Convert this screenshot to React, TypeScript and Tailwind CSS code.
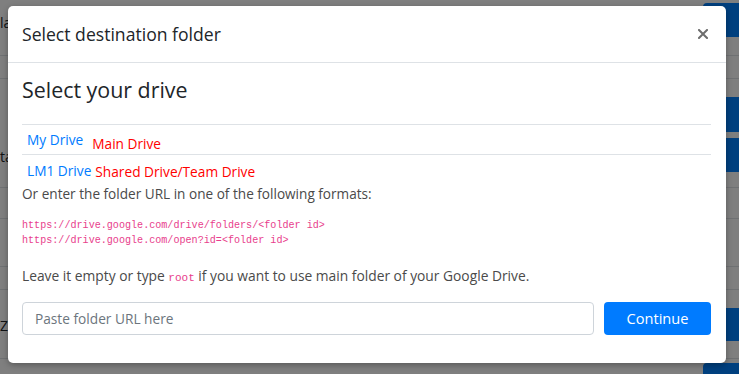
import React from 'react'

const sans = { fontFamily: '"Open Sans", "Noto Sans", sans-serif' }
const mono = { fontFamily: '"Liberation Mono", "DejaVu Sans Mono", monospace' }

function BgRow({
  h,
  text,
  textTop,
  blues = [],
}: {
  h: string
  text?: string
  textTop?: string
  blues?: string[]
}) {
  return (
    <div className={`relative flex justify-between border-b border-[#dee2e6] ${h}`}>
      <div className={`text-[14px] text-[#212529] ${textTop ?? ''}`}>{text}</div>
      <div className="flex flex-col">
        {blues.map((b, i) => (
          <div key={i} className={`w-[36px] rounded-l-[4px] bg-[#0080ff] ${b}`} />
        ))}
      </div>
    </div>
  )
}

export default function App() {
  return (
    <div className="relative h-[374px] w-[739px] overflow-hidden bg-white" style={sans}>
      {/* page behind the dialog */}
      <div className="flex flex-col">
        <BgRow h="h-[56px]" text="la" textTop="mt-[12px] text-[#5a2a7a]" blues={['mt-[3px] h-[34px]']} />
        <BgRow h="h-[23px]" />
        <BgRow h="h-[109px]" text="ta" textTop="mt-[67px]" blues={['mt-[18px] h-[35px]', 'mt-[6px] h-[34px]']} />
        <BgRow h="h-[31px]" />
        <BgRow h="h-[48px]" />
        <BgRow h="h-[23px]" />
        <BgRow h="h-[69px]" text="Z" textTop="mt-[25px]" blues={['mt-[18px] h-[33px]']} />
        <BgRow h="h-[20px]" blues={['mt-[4px] h-[30px]']} />
      </div>

      {/* backdrop */}
      <div className="absolute inset-0 bg-black/50" />

      {/* modal */}
      <div className="absolute left-[8px] top-[6px] flex h-[357px] w-[718px] flex-col rounded-[5px] bg-white shadow-[0_2px_6px_rgba(0,0,0,0.3)]">
        <div className="flex h-[57px] shrink-0 items-center justify-between border-b border-[#dee2e6] pl-[14px] pr-[18px]">
          <h5 className="text-[17.6px] leading-[27px] text-[#212529]">Select destination folder</h5>
          <svg width="10" height="10" viewBox="0 0 10 10" className="text-[#6d6d6d]">
            <path d="M1 1 L9 9 M9 1 L1 9" stroke="currentColor" strokeWidth="2" strokeLinecap="square" />
          </svg>
        </div>

        <div className="flex flex-col pl-[14px] pr-[15px]">
          <h3 className="mt-[13px] text-[21.4px] leading-[28px] text-[#212529]">Select your drive</h3>

          <div className="mt-[20px] border-t border-[#dee2e6]" />
          <div className="flex h-[29px] items-start pl-[5px] text-[13.7px]">
            <span className="mt-[5px] leading-[20px] text-[#007bff]">My Drive</span>
            <span className="ml-[9px] mt-[9px] leading-[20px] text-[#ff0000]">Main Drive</span>
          </div>
          <div className="border-t border-[#dee2e6]" />
          <div className="flex h-[29px] items-start pl-[5px] text-[13.7px]">
            <span className="mt-[6px] leading-[20px] text-[#007bff]">LM1 Drive</span>
            <span className="ml-[4px] mt-[7px] leading-[20px] text-[#ff0000]">Shared Drive/Team Drive</span>
          </div>

          <p className="text-[13.6px] leading-[20px] text-[#4a4a4a]">
            Or enter the folder URL in one of the following formats:
          </p>

          <pre className="mt-[14px] text-[10.1px] leading-[15px] text-[#e83e8c]" style={mono}>
            {'https://drive.google.com/drive/folders/<folder id>\nhttps://drive.google.com/open?id=<folder id>'}
          </pre>

          <p className="mt-[18px] text-[13.8px] leading-[20px] text-[#4a4a4a]">
            Leave it empty or type{' '}
            <code className="text-[11px] text-[#e83e8c]" style={mono}>
              root
            </code>{' '}
            if you want to use main folder of your Google Drive.
          </p>

          <div className="mt-[14px] flex gap-[10px]">
            <input
              placeholder="Paste folder URL here"
              className="h-[33px] flex-1 rounded-[4px] border border-[#ced4da] px-[12px] text-[13.7px] text-[#495057] placeholder:text-[#6c757d] outline-none"
              style={sans}
            />
            <button className="h-[33px] w-[107px] rounded-[4px] bg-[#007bff] text-[14.6px] text-white">
              Continue
            </button>
          </div>
        </div>
      </div>
    </div>
  )
}
